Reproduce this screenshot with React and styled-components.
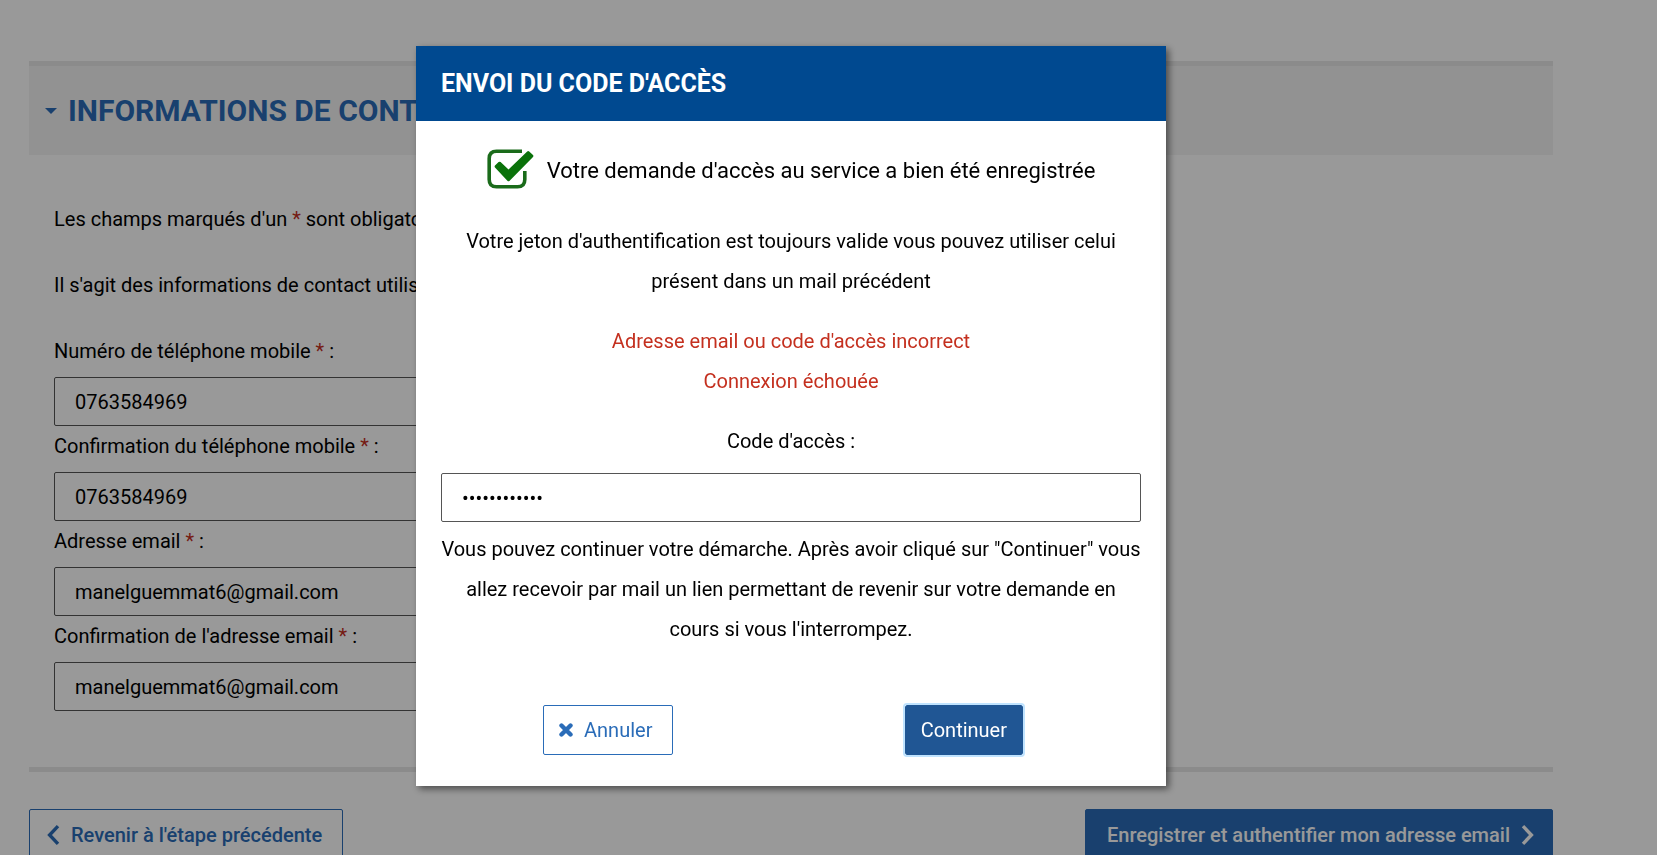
import React from "react";
import styled, { createGlobalStyle } from "styled-components";

const GlobalStyle = createGlobalStyle`
  *, *::before, *::after { box-sizing: border-box; }
  body {
    margin: 0;
    background: #fff;
    color: #000;
    font-family: Roboto, "Liberation Sans", sans-serif;
    font-size: 20px;
    line-height: 40px;
    overflow: hidden;
  }
  button, input { font: inherit; }
`;

const Page = styled.main`
  padding: 61px 104px 40px 29px;
`;

const Section = styled.section`
  border-top: 5px solid #e8e8e8;
  border-bottom: 5px solid #e8e8e8;
`;

const SectionHeader = styled.h2`
  display: flex;
  align-items: center;
  gap: 11px;
  margin: 0;
  padding: 25px 16px 24px;
  background: #f4f4f4;
  color: #2a6cb8;
  font-size: 30px;
  line-height: 40px;
  font-weight: 700;
  white-space: nowrap;
`;

const Caret = styled.svg`
  width: 12px;
  height: 6px;
  flex: none;
`;

const SectionBody = styled.div`
  display: flex;
  flex-direction: column;
  gap: 26px;
  padding: 44px 25px 56px;
`;

const Text = styled.p`
  margin: 0;
`;

const Fields = styled.div`
  width: 60%;
`;

const Label = styled.label`
  display: block;
  margin-bottom: 6px;
`;

const Required = styled.span`
  color: #c4301f;
`;

const Input = styled.input`
  display: block;
  width: 100%;
  height: 49px;
  padding: 0 20px;
  border: 1px solid #555;
  border-radius: 2px;
  background: #fff;
  color: #000;
  outline: none;
`;

const PageActions = styled.div`
  display: flex;
  justify-content: space-between;
  margin-top: 37px;
`;

const Button = styled.button`
  display: flex;
  align-items: center;
  gap: 11px;
  height: 50px;
  padding: 0 20px 0 15px;
  border: 1px solid #2a6cb8;
  border-radius: 2px;
  background: #fff;
  color: #2a6cb8;
  white-space: nowrap;
  cursor: pointer;
`;

const StepButton = styled(Button)`
  height: 52px;
  padding: ${(p) => (p.$primary ? "0 18px 0 21px" : "0 20px 0 17px")};
  background: ${(p) => (p.$primary ? "#2a6cb8" : "#fff")};
  color: ${(p) => (p.$primary ? "#fff" : "#2a6cb8")};
  font-weight: 500;
`;

const ConfirmButton = styled(Button)`
  padding: 0 15px;
  border-color: #205694;
  background: #205694;
  color: #fff;
  outline: 2px solid #bfe3ff;
`;

const Icon = styled.svg`
  width: ${(p) => p.$w}px;
  height: ${(p) => p.$h}px;
  flex: none;
`;

const Overlay = styled.div`
  position: fixed;
  inset: 0;
  display: flex;
  justify-content: center;
  align-items: flex-start;
  padding: 46px 104px 0 29px;
  background: rgba(0, 0, 0, 0.4);
`;

const Dialog = styled.div`
  width: 750px;
  max-width: 100%;
  background: #fff;
  box-shadow: 3px 3px 7px rgba(0, 0, 0, 0.5);
`;

const DialogTitle = styled.h3`
  margin: 0;
  padding: 18px 25px 17px;
  background: #004990;
  color: #fff;
  font-size: 25px;
  line-height: 40px;
  font-weight: 700;
`;

const DialogBody = styled.div`
  display: flex;
  flex-direction: column;
  gap: 20px;
  padding: 28px 25px 31px;
  text-align: center;
`;

const Success = styled.p`
  display: flex;
  justify-content: center;
  align-items: flex-start;
  gap: 13px;
  margin: 0 0 8px;
  font-size: 22px;
  line-height: 44px;
`;

const ErrorText = styled(Text)`
  color: #c4301f;
`;

const CodeLabel = styled(Label)`
  margin-bottom: 12px;
`;

const Hint = styled(Text)`
  margin-top: 7px;
`;

const DialogActions = styled.div`
  display: flex;
  justify-content: space-between;
  margin-top: 36px;
  padding: 0 118px 0 102px;
`;

const fields = [
  { id: "tel", label: "Numéro de téléphone mobile", type: "tel", value: "0763584969" },
  { id: "tel2", label: "Confirmation du téléphone mobile", type: "tel", value: "0763584969" },
  { id: "email", label: "Adresse email", type: "email", value: "manelguemmat6@gmail.com" },
  { id: "email2", label: "Confirmation de l'adresse email", type: "email", value: "manelguemmat6@gmail.com" },
];

export default function App() {
  return (
    <>
      <GlobalStyle />
      <Page>
        <Section>
          <SectionHeader>
            <Caret viewBox="0 0 12 6" aria-hidden="true">
              <path d="M0 0H12L6 6Z" fill="currentColor" />
            </Caret>
            INFORMATIONS DE CONTACT
          </SectionHeader>
          <SectionBody>
            <Text>
              Les champs marqués d'un <Required>*</Required> sont obligatoires
            </Text>
            <Text>Il s'agit des informations de contact utilisées</Text>
            <Fields>
              {fields.map((f) => (
                <React.Fragment key={f.id}>
                  <Label htmlFor={f.id}>
                    {f.label} <Required>*</Required> :
                  </Label>
                  <Input id={f.id} type={f.type} defaultValue={f.value} />
                </React.Fragment>
              ))}
            </Fields>
          </SectionBody>
        </Section>
        <PageActions>
          <StepButton type="button">
            <Icon viewBox="0 0 13 20" $w={13} $h={20} aria-hidden="true">
              <path d="M11 1.2L2.6 10L11 18.8" fill="none" stroke="currentColor" strokeWidth="3.4" />
            </Icon>
            Revenir à l'étape précédente
          </StepButton>
          <StepButton type="button" $primary>
            Enregistrer et authentifier mon adresse email
            <Icon viewBox="0 0 13 20" $w={13} $h={20} aria-hidden="true">
              <path d="M2 1.2L10.4 10L2 18.8" fill="none" stroke="currentColor" strokeWidth="3.4" />
            </Icon>
          </StepButton>
        </PageActions>
      </Page>
      <Overlay>
        <Dialog role="dialog" aria-modal="true" aria-labelledby="dialog-title">
          <DialogTitle id="dialog-title">ENVOI DU CODE D'ACCÈS</DialogTitle>
          <DialogBody>
            <Success>
              <Icon viewBox="0 0 47 40" $w={47} $h={40} aria-hidden="true">
                <path
                  d="M35 2.2H9.5Q2.2 2.2 2.2 9.5V30.5Q2.2 37.8 9.5 37.8H30.5Q37.8 37.8 37.8 30.5V22"
                  fill="none"
                  stroke="#1a6b1a"
                  strokeWidth="3.6"
                />
                <path
                  d="M8 18.4Q7.2 17.4 8 16.6L11.6 13.1Q12.6 12.3 13.6 13.1L21.5 20.6L40.2 2.4Q41.2 1.6 42.2 2.4L46 6.1Q46.8 7 46 7.9L22.4 31.9Q21.5 32.7 20.6 31.9Z"
                  fill="#0a720a"
                />
              </Icon>
              Votre demande d'accès au service a bien été enregistrée
            </Success>
            <Text>
              Votre jeton d'authentification est toujours valide vous pouvez utiliser celui présent dans un
              mail précédent
            </Text>
            <ErrorText role="alert">
              Adresse email ou code d'accès incorrect
              <br />
              Connexion échouée
            </ErrorText>
            <div>
              <CodeLabel htmlFor="code">Code d'accès :</CodeLabel>
              <Input id="code" type="password" defaultValue="123456789012" />
              <Hint>
                Vous pouvez continuer votre démarche. Après avoir cliqué sur "Continuer" vous allez recevoir
                par mail un lien permettant de revenir sur votre demande en cours si vous l'interrompez.
              </Hint>
            </div>
            <DialogActions>
              <Button type="button">
                <Icon viewBox="0 0 14 14" $w={14} $h={14} aria-hidden="true">
                  <path
                    d="M2.5 2.5L11.5 11.5M11.5 2.5L2.5 11.5"
                    stroke="currentColor"
                    strokeWidth="4.4"
                    strokeLinecap="round"
                  />
                </Icon>
                Annuler
              </Button>
              <ConfirmButton type="button">Continuer</ConfirmButton>
            </DialogActions>
          </DialogBody>
        </Dialog>
      </Overlay>
    </>
  );
}
